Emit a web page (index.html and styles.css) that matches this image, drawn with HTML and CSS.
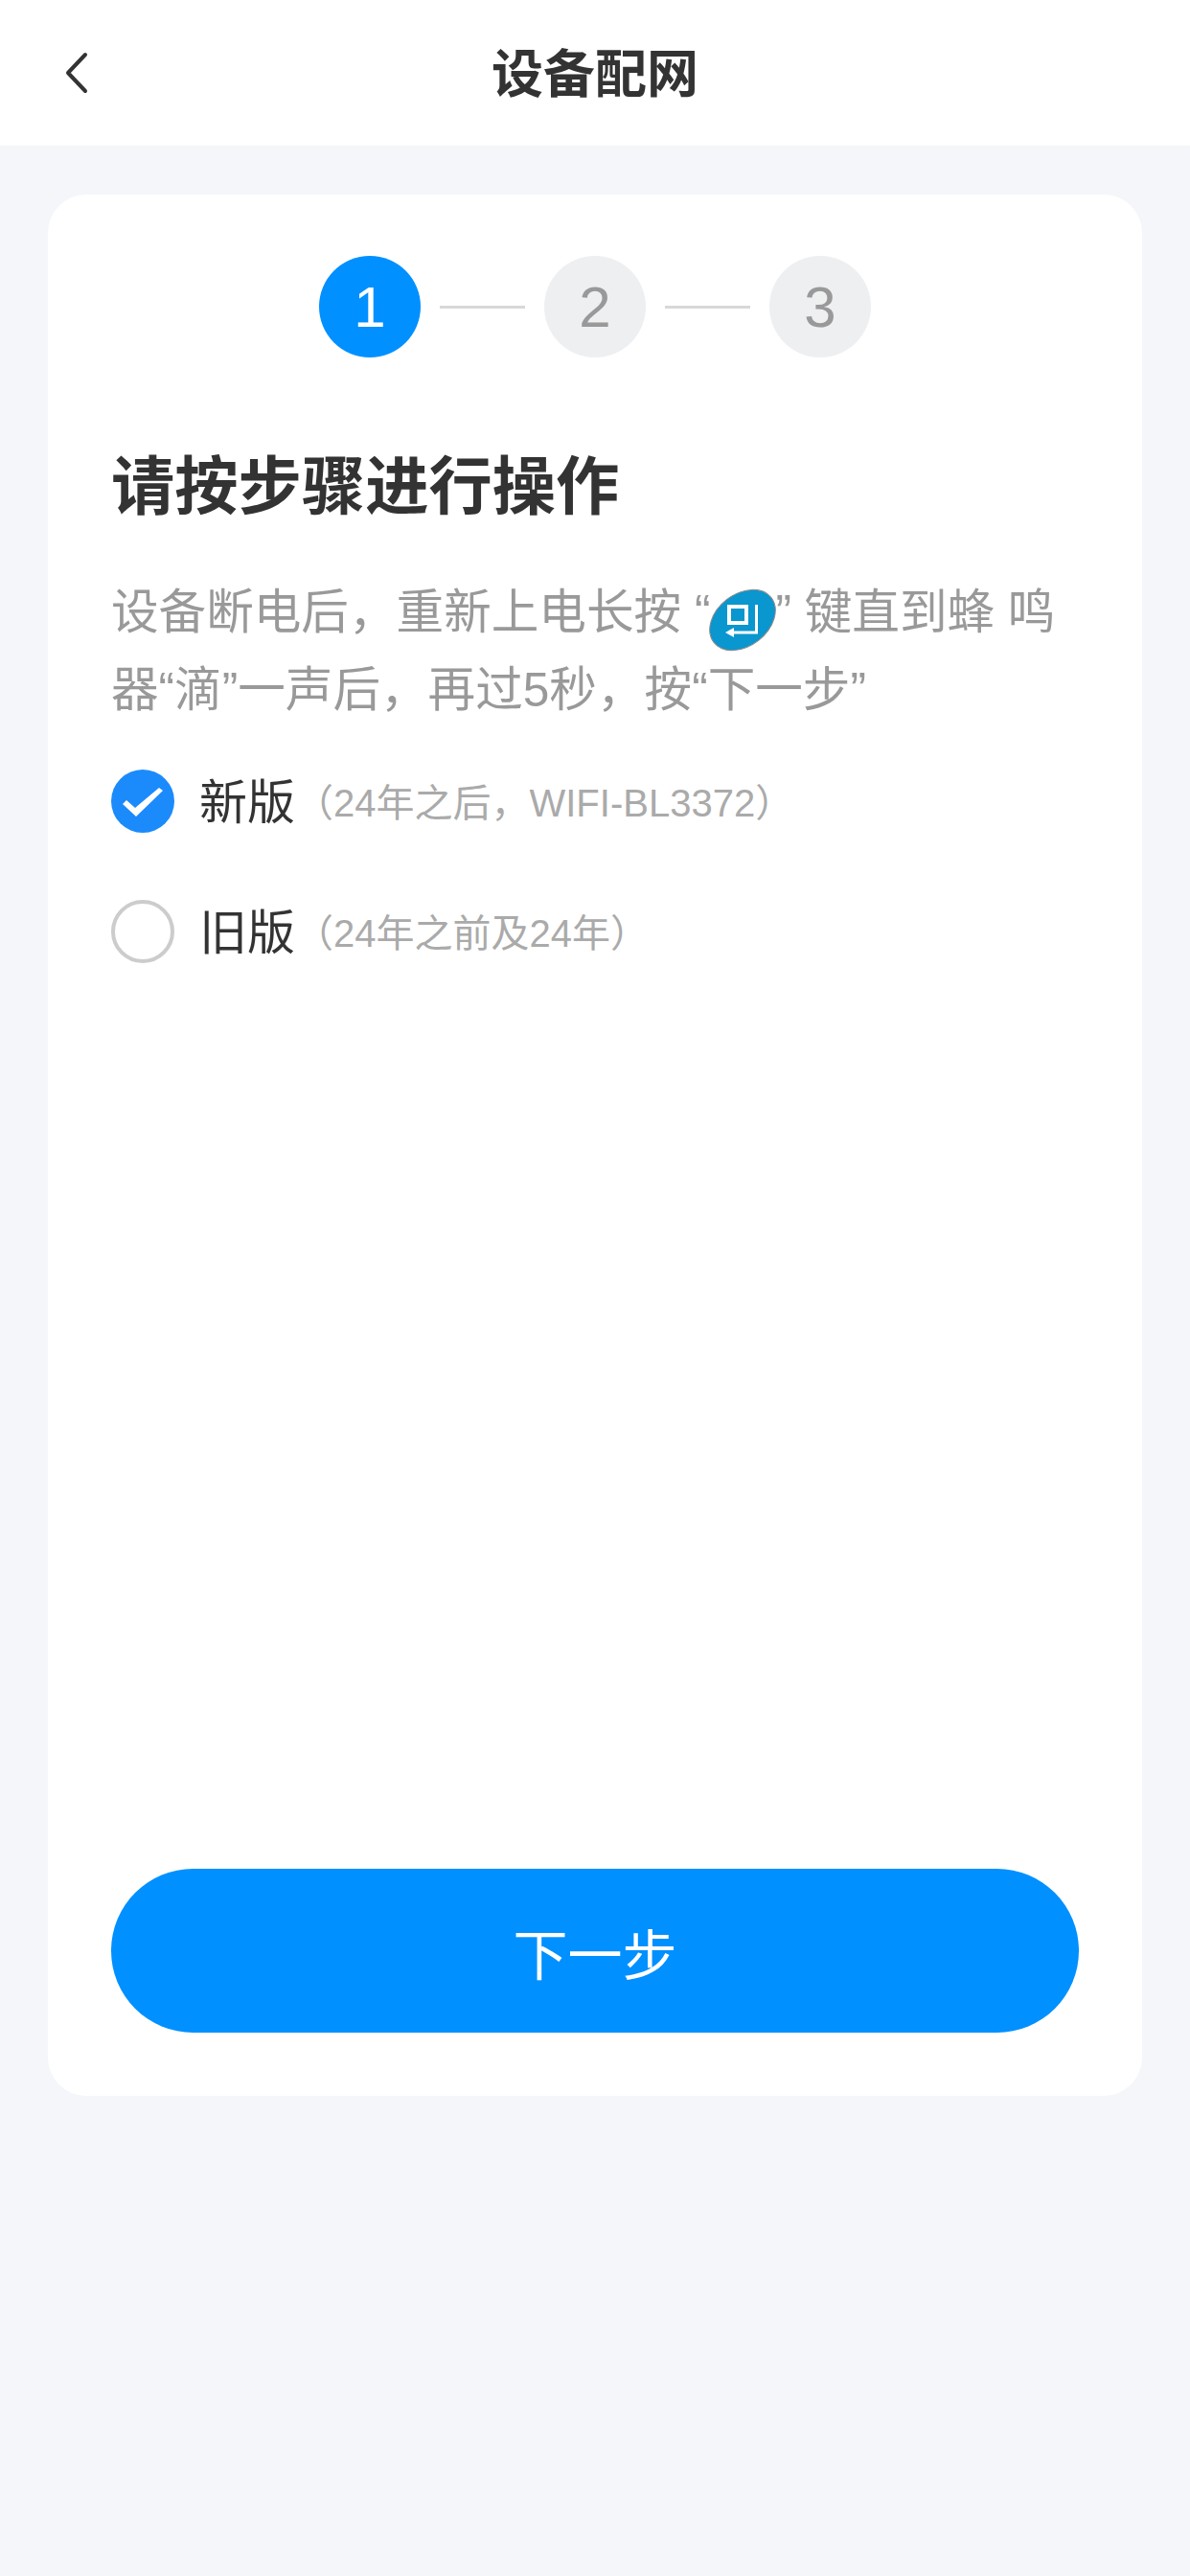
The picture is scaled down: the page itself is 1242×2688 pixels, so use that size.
FILE: index.html
```html
<!DOCTYPE html>
<html lang="zh-CN">
<head>
    <meta charset="UTF-8">
    <meta name="viewport" content="width=device-width, initial-scale=1.0">
    <title>设备配网</title>
    <link rel="stylesheet" href="styles.css">
</head>
<body>

    <header class="navbar">
        <button class="back-btn" aria-label="返回">
            <svg width="30" height="46" viewBox="0 0 30 46">
                <path d="M25 4 L7 23 L25 42" fill="none" stroke="#333" stroke-width="4" stroke-linecap="round" stroke-linejoin="round"/>
            </svg>
        </button>
        <h1 class="navbar-title">设备配网</h1>
    </header>

    <main class="page">
        <section class="card">
            <div class="steps">
                <span class="step step-active">1</span>
                <span class="step-line"></span>
                <span class="step">2</span>
                <span class="step-line"></span>
                <span class="step">3</span>
            </div>

            <h2 class="card-title">请按步骤进行操作</h2>

            <p class="desc">设备断电后，重新上电长按 “<svg class="key-icon" width="68" height="66" viewBox="0 0 68 66">
                    <ellipse cx="34" cy="33" rx="38" ry="27" transform="rotate(-38 34 33)" fill="#0a96cf" stroke="#8a8a8a" stroke-width="1"/>
                    <path d="M20 19 H38 V36 H20 Z" fill="none" stroke="#fff" stroke-width="4"/>
                    <path d="M48.5 17 V46 H22" fill="none" stroke="#fff" stroke-width="3"/>
                    <path d="M16 46 L25 41 V51 Z" fill="#fff"/>
                </svg>” 键直到蜂 鸣器“滴”一声后，再过5秒，按“下一步”</p>

            <div class="options">
                <div class="option">
                    <span class="radio radio-checked">
                        <svg width="66" height="66" viewBox="0 0 66 66">
                            <path d="M12 36 L16 32 L25 40 L50 19 L54 22 L26 49 Z" fill="#fff"/>
                        </svg>
                    </span>
                    <span class="option-name">新版</span>
                    <span class="option-note">（24年之后，WIFI-BL3372）</span>
                </div>
                <div class="option">
                    <span class="radio"></span>
                    <span class="option-name">旧版</span>
                    <span class="option-note">（24年之前及24年）</span>
                </div>
            </div>

            <button class="next-btn">下一步</button>
        </section>
    </main>

</body>
</html>
```

FILE: styles.css
```css
:root {
    --primary-color: #0090ff;
    --page-bg: #f4f6fa;
    --dark-text: #333;
    --gray-text: #999;
    --light-text: #aaa;
}

body {
    font-family: "Liberation Sans", "Noto Sans CJK SC", sans-serif;
    background-color: var(--page-bg);
    color: var(--dark-text);
    margin: 0;
    min-height: 2688px;
}

.navbar {
    height: 152px;
    box-sizing: border-box;
    padding-bottom: 5px;
    background-color: #fff;
    display: flex;
    align-items: center;
    justify-content: center;
    position: relative;
}

.back-btn {
    position: absolute;
    left: 64px;
    top: 53px;
    padding: 0;
    border: none;
    background: none;
    line-height: 0;
}

.navbar-title {
    margin: 0;
    font-size: 54px;
    font-weight: 700;
}

.page {
    padding: 51px 50px 0;
}

.card {
    height: 1984px;
    box-sizing: border-box;
    background-color: #fff;
    border-radius: 40px;
    padding: 64px 66px 66px;
    display: flex;
    flex-direction: column;
}

.steps {
    display: flex;
    align-items: center;
    justify-content: center;
    gap: 20px;
}

.step {
    width: 106px;
    height: 106px;
    border-radius: 50%;
    background-color: #eeeff1;
    color: #999;
    font-size: 60px;
    display: flex;
    align-items: center;
    justify-content: center;
}

.step-active {
    background-color: var(--primary-color);
    color: #fff;
}

.step-line {
    width: 89px;
    height: 3px;
    background-color: #d8d8d8;
}

.card-title {
    margin: 90px 0 0;
    font-size: 66.3px;
    line-height: 90px;
    font-weight: 700;
}

.desc {
    margin: 46px 0 0;
    font-size: 49.6px;
    line-height: 80px;
    color: var(--gray-text);
}

.key-icon {
    vertical-align: -24px;
    overflow: visible;
}

.options {
    margin-top: 43px;
    display: flex;
    flex-direction: column;
    gap: 70px;
}

.option {
    height: 66px;
    display: flex;
    align-items: center;
}

.radio {
    width: 66px;
    height: 66px;
    box-sizing: border-box;
    border-radius: 50%;
    border: 4px solid #ccc;
    flex-shrink: 0;
}

.radio-checked {
    border: none;
    background-color: #1b8bfb;
    line-height: 0;
}

.option-name {
    margin: 0 0 6px 26px;
    font-size: 50px;
}

.option-note {
    margin-bottom: 2px;
    font-size: 40px;
    color: var(--light-text);
}

.next-btn {
    margin-top: auto;
    height: 171px;
    border: none;
    border-radius: 86px;
    background-color: var(--primary-color);
    color: #fff;
    font-family: inherit;
    font-size: 57px;
}
```
